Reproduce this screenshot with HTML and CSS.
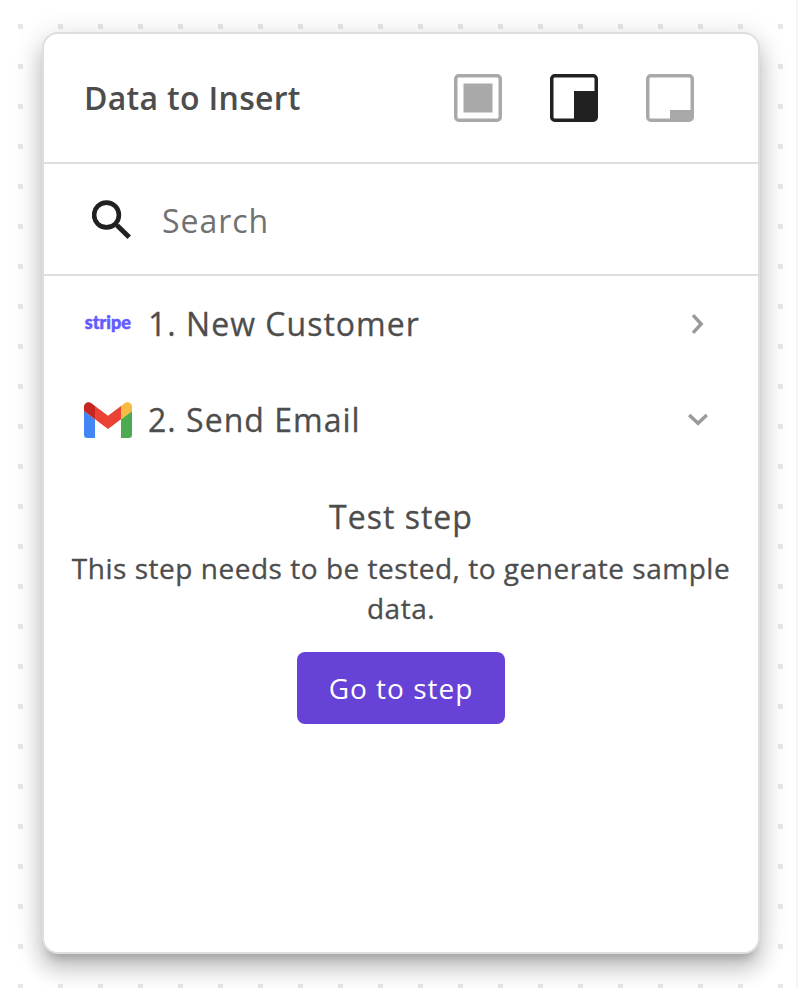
FILE: index.html
```html
<!DOCTYPE html>
<html lang="en">
<head>
<meta charset="utf-8">
<title>Data to Insert</title>
<link rel="stylesheet" href="styles.css">
</head>
<body>
<main class="canvas">
  <section class="panel">
    <header class="panel-header">
      <h1 class="title">Data to Insert</h1>
      <div class="sizes">
        <button class="size" aria-label="Maximize"><svg viewBox="0 0 48 48"><rect x="1.75" y="1.75" width="44.5" height="44.5" rx="3"/><path class="fill" d="M9.5 9.5h29v29h-29z"/></svg></button>
        <button class="size active" aria-label="Dock"><svg viewBox="0 0 48 48"><rect x="1.75" y="1.75" width="44.5" height="44.5" rx="3"/><path class="fill" d="M24 17h23v29H24z"/></svg></button>
        <button class="size" aria-label="Minimize"><svg viewBox="0 0 48 48"><rect x="1.75" y="1.75" width="44.5" height="44.5" rx="3"/><path class="fill" d="M24 36h23v10H24z"/></svg></button>
      </div>
    </header>
    <div class="search">
      <svg class="search-icon" viewBox="0 0 40 40"><circle cx="14.5" cy="15" r="12.4" stroke-width="4.6"/><path d="M24.2 25l3 2.2" stroke-width="3"/><path d="M25.2 25.5L37.2 37.2" stroke-width="5"/></svg>
      <input class="search-input" type="text" placeholder="Search">
    </div>
    <div class="step">
      <svg class="logo" viewBox="0 0 48 48"><text class="stripe" x="0.8" y="29.3" textLength="46.2" lengthAdjust="spacingAndGlyphs">stripe</text></svg>
      <span class="name">1. New Customer</span>
      <svg class="chevron" viewBox="0 0 24 24"><path d="M7 3.2L15.2 12 7 20.8"/></svg>
    </div>
    <div class="step">
      <svg class="logo" viewBox="0 0 48 48">
        <path fill="#4285f4" d="M0 15l11 8.2V42H3.3A3.3 3.3 0 0 1 0 38.7z"/>
        <path fill="#4caa50" d="M48 15l-11 8.2V42h7.7a3.3 3.3 0 0 0 3.3-3.3z"/>
        <path fill="#ea4335" d="M11 10l13 9.8L37 10v13.2L24 33 11 23.2z"/>
        <path fill="#c5261f" d="M0 15v-4.1C0 6.9 4.8 4.5 8.4 7.9L11 10v13.2z"/>
        <path fill="#f6bb42" d="M48 15v-4.1c0-4-4.8-6.4-8.4-3L37 10v13.2z"/>
      </svg>
      <span class="name">2. Send Email</span>
      <svg class="chevron" viewBox="0 0 24 24"><path d="M3.2 7L12 15.3 20.8 7"/></svg>
    </div>
    <div class="empty">
      <h2 class="empty-title">Test step</h2>
      <p class="empty-text">This step needs to be tested, to generate sample data.</p>
      <button class="go">Go to step</button>
    </div>
  </section>
</main>
</body>
</html>
```
FILE: styles.css
```css
* { box-sizing: border-box; }
body {
  margin: 0;
  font-family: "Open Sans", sans-serif;
  color: #4d4d4d;
}
h1, h2, p { margin: 0; font-weight: 400; }
button { border: 0; padding: 0; background: none; font: inherit; }

.canvas {
  height: 988px;
  padding: 32px 36px 34px 42px;
  overflow: hidden;
  border-right: 2px solid #f5f5f5;
  background:
    linear-gradient(to right, transparent 5px, #fff 5px) 18px 24px / 40px 40px,
    linear-gradient(to bottom, #e6e6eb 5px, #fff 5px) 18px 24px / 40px 40px;
}
.panel {
  width: 718px;
  height: 922px;
  border: 2px solid #dedede;
  border-radius: 16px;
  background: #fff;
  box-shadow: 0 10px 10px -6px rgba(0, 0, 0, .2),
    0 16px 20px 2px rgba(0, 0, 0, .14),
    0 6px 28px 4px rgba(0, 0, 0, .12);
}
.panel-header {
  display: flex;
  align-items: center;
  justify-content: space-between;
  height: 130px;
  padding: 0 64px 0 40px;
  border-bottom: 2px solid #dedede;
}
.title {
  padding-bottom: 2px;
  font-size: 32px;
  font-weight: 600;
  letter-spacing: .3px;
}
.sizes { display: flex; gap: 48px; }
.size { width: 48px; height: 48px; color: #a9a9a9; }
.size.active { color: #212121; }
.size svg { display: block; }
.size rect { fill: none; stroke: currentColor; stroke-width: 3.5; }
.fill { fill: currentColor; }

.search {
  display: flex;
  align-items: center;
  height: 112px;
  padding: 2px 40px 0 48px;
  border-bottom: 2px solid #dedede;
}
.search-icon { width: 40px; height: 40px; fill: none; stroke: #212121; }
.search-input {
  flex: 1;
  margin-left: 30px;
  padding: 1px 0 0;
  border: 0;
  outline: 0;
  background: none;
  font: 400 32px/44px "Open Sans", sans-serif;
  letter-spacing: .95px;
}
.search-input::placeholder { color: #717171; opacity: 1; }

.step {
  display: flex;
  align-items: center;
  height: 96px;
  padding: 0 48px 0 40px;
}
.logo { width: 48px; height: 48px; margin-right: 16px; overflow: visible; }
.stripe { fill: #635bff; stroke: #635bff; stroke-width: .5; font: 900 19px Lato, sans-serif; }
.name { flex: 1; padding-bottom: 2px; font-size: 32px; letter-spacing: 1.02px; }
.name, .empty-title, .empty-text { -webkit-text-stroke: .3px #4d4d4d; }
.chevron { width: 24px; height: 24px; fill: none; stroke: #9a9a9a; stroke-width: 3.4; }

.empty {
  display: flex;
  flex-direction: column;
  align-items: center;
  padding: 24px 20px 0;
  text-align: center;
}
.empty-title { font-size: 32px; line-height: 50px; letter-spacing: 1px; }
.empty-text { margin-top: 6px; font-size: 28px; line-height: 40px; letter-spacing: .52px; }
.go {
  width: 208px;
  height: 72px;
  margin-top: 24px;
  border-radius: 8px;
  background: #6742d7;
  color: #fff;
  font-size: 28px;
  letter-spacing: 1px;
}
```
